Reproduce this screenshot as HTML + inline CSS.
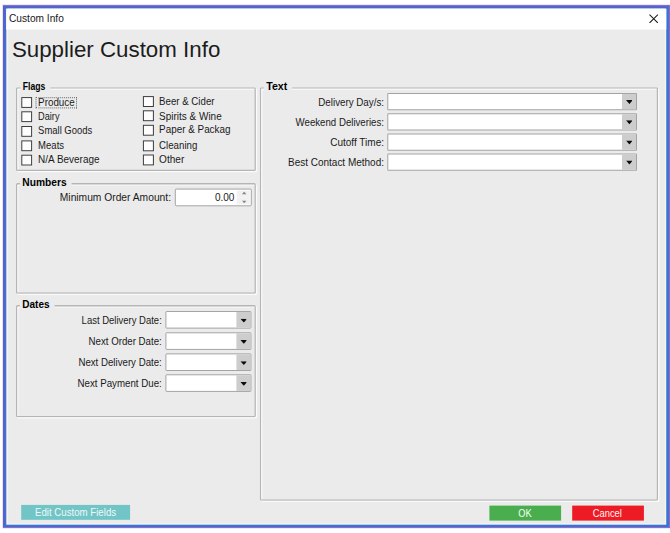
<!DOCTYPE html>
<html lang="en">
<head>
<meta charset="utf-8">
<title>Custom Info</title>
<style>
html,body{margin:0;padding:0;background:#fff;}
body{width:670px;height:533px;position:relative;overflow:hidden;font-family:"Liberation Sans",sans-serif;}
*{box-sizing:border-box;}
.abs,.t,.b{position:absolute;}
.b{left:0;top:0;transform-origin:0 0;margin:0;padding:0;min-width:0;}
.t{left:0;top:0;transform-origin:0 0;margin:0;padding:0;line-height:1;white-space:nowrap;font-weight:400;display:block;}
.gb{border-radius:1.6px;border:0;box-shadow:inset 0 0 0 1.3px #b5b5b5, inset 2.5px 2.5px 0 0 rgba(255,255,255,.8), 1.2px 1.2px 0 rgba(255,255,255,.8);}
.lgbg{background:#ebebeb;}
.cb{background:#fdfdfd;border:1px solid #3a3a3a;}
.combo{background:#fff;border:1px solid #a3a3a3;border-radius:1px;}
.combo .btn{position:absolute;right:0;top:0;bottom:0;width:14.2px;background:#cdcdcd;}
.combo .btn svg{position:absolute;left:50%;top:50%;margin-left:-3.3px;margin-top:-1.3px;}
</style>
</head>
<body>

<div class="b" style="transform:translate(2.20px,4.40px) scale(0.99970,1.00038);width:668px;height:524px;background:rgba(98,94,201,.22)"></div>
<div class="b" style="transform:translate(3.00px,5.20px) scale(1.00000,0.99924);width:667px;height:523px;background:#625ec9"></div>
<div class="b" style="transform:translate(668.70px,5.20px) scale(1.30000,0.99924);width:1px;height:523px;background:#7672d2"></div>
<div class="b" style="transform:translate(5.00px,7.60px) scale(1.00000,0.99923);width:663px;height:519px;background:#2f78d6"></div>
<div class="b" style="transform:translate(6.30px,8.70px) scale(0.99992,1.00000);width:660px;height:516px;background:#f8f2ed"></div>
<div class="b" style="transform:translate(8.10px,8.70px) scale(0.99954,0.99942);width:657px;height:515px;background:#ebebeb"></div>
<div class="b" style="transform:translate(6.20px,8.70px) scale(1.00008,0.99524);width:660px;height:21px;background:#fff"></div>
<div class="t wintitle" style="transform:translate(9.00px,14.00px) scaleX(0.9871);font-size:10.3px;color:#1a1a1a;">Custom Info</div>
<svg class="b" style="transform:translate(649.0px,14.1px)" width="9.4" height="9.4" viewBox="0 0 9.4 9.4"><path d="M0.5 0.5 L8.9 8.9 M8.9 0.5 L0.5 8.9" stroke="#222" stroke-width="1.05" fill="none"/></svg>
<h1 class="t" style="transform:translate(11.90px,38.00px) scaleX(0.9790);font-size:22.8px;color:#1c1c1c;">Supplier Custom Info</h1>
<div class="b gb" style="transform:translate(15.90px,87.30px) scale(1.00000,0.99643);width:240px;height:84px;"></div>
<div class="b lgbg" style="transform:translate(20.40px,86.30px) scale(0.99667,1.05000);width:30px;height:4px;"></div>
<div class="t legend" style="transform:translate(22.80px,82.00px) scaleX(0.8290);font-size:10.4px;color:#000;font-weight:700;">Flags</div>
<div class="b cb" style="transform:translate(21.30px,97.10px) scale(0.98182,0.98182);width:11px;height:11px;"></div>
<label class="t" style="transform:translate(38.10px,98.00px) scaleX(0.9541);font-size:10.3px;color:#1a1a1a;">Produce</label>
<div class="b cb" style="transform:translate(21.30px,111.30px) scale(0.98182,0.98182);width:11px;height:11px;"></div>
<label class="t" style="transform:translate(38.10px,112.00px) scaleX(0.8905);font-size:10.3px;color:#1a1a1a;">Dairy</label>
<div class="b cb" style="transform:translate(21.30px,126.00px) scale(0.98182,0.98182);width:11px;height:11px;"></div>
<label class="t" style="transform:translate(38.10px,126.00px) scaleX(0.9177);font-size:10.3px;color:#1a1a1a;">Small Goods</label>
<div class="b cb" style="transform:translate(21.30px,140.40px) scale(0.98182,0.98182);width:11px;height:11px;"></div>
<label class="t" style="transform:translate(38.10px,141.00px) scaleX(0.9250);font-size:10.3px;color:#1a1a1a;">Meats</label>
<div class="b cb" style="transform:translate(21.30px,154.70px) scale(0.98182,0.98182);width:11px;height:11px;"></div>
<label class="t" style="transform:translate(38.10px,155.00px) scaleX(0.9662);font-size:10.3px;color:#1a1a1a;">N/A Beverage</label>
<div class="b" style="transform:translate(35.50px,97.20px) scale(0.98810,1.01818);width:42px;height:11px;border:1px dotted #666"></div>
<div class="b cb" style="transform:translate(142.90px,96.10px) scale(1.00000,0.99091);width:11px;height:11px;"></div>
<label class="t" style="transform:translate(159.10px,97.00px) scaleX(0.9397);font-size:10.3px;color:#1a1a1a;">Beer &amp; Cider</label>
<div class="b cb" style="transform:translate(142.90px,110.30px) scale(1.00000,0.99091);width:11px;height:11px;"></div>
<label class="t" style="transform:translate(159.10px,112.00px) scaleX(0.9680);font-size:10.3px;color:#1a1a1a;">Spirits &amp; Wine</label>
<div class="b cb" style="transform:translate(142.90px,124.80px) scale(1.00000,0.99091);width:11px;height:11px;"></div>
<label class="t" style="transform:translate(159.10px,125.00px) scaleX(0.9594);font-size:10.3px;color:#1a1a1a;">Paper &amp; Packag</label>
<div class="b cb" style="transform:translate(142.90px,140.40px) scale(1.00000,0.99091);width:11px;height:11px;"></div>
<label class="t" style="transform:translate(159.10px,141.00px) scaleX(0.9396);font-size:10.3px;color:#1a1a1a;">Cleaning</label>
<div class="b cb" style="transform:translate(142.90px,154.50px) scale(1.00000,0.99091);width:11px;height:11px;"></div>
<label class="t" style="transform:translate(159.10px,155.00px) scaleX(0.9780);font-size:10.3px;color:#1a1a1a;">Other</label>
<div class="b gb" style="transform:translate(15.90px,183.10px) scale(1.00000,0.99730);width:240px;height:111px;"></div>
<div class="b lgbg" style="transform:translate(19.90px,182.10px) scale(0.99423,1.05000);width:52px;height:4px;"></div>
<div class="t legend" style="transform:translate(22.30px,178.00px) scaleX(0.9834);font-size:10.4px;color:#000;font-weight:700;">Numbers</div>
<label class="t" style="transform:translate(59.80px,193.00px) scaleX(0.9965);font-size:10.3px;color:#1a1a1a;">Minimum Order Amount:</label>
<div class="b combo" style="transform:translate(174.80px,188.60px) scale(1.00000,0.98333);width:77px;height:18px;border-radius:1.5px"><div class="abs" style="left:61.3px;top:0.9px;width:13.2px;height:6.7px;background:#f1f1f1"></div><div class="abs" style="left:61.3px;top:8.4px;width:13.2px;height:6.9px;background:#f1f1f1"></div><svg class="abs" style="left:66.2px;top:2.3px" width="4.8" height="3" viewBox="0 0 4.8 3"><path d="M0 3 L2.4 0 L4.8 3 Z" fill="#868686"/></svg><svg class="abs" style="left:66.2px;top:11.3px" width="4.8" height="3" viewBox="0 0 4.8 3"><path d="M0 0 L2.4 3 L4.8 0 Z" fill="#868686"/></svg></div>
<span class="t" style="transform:translate(214.90px,193.00px) scaleX(0.9727);font-size:10.3px;color:#1a1a1a;">0.00</span>
<div class="b gb" style="transform:translate(15.90px,305.10px) scale(1.00000,1.00089);width:240px;height:112px;"></div>
<div class="b lgbg" style="transform:translate(19.90px,304.10px) scale(0.99143,1.05000);width:35px;height:4px;"></div>
<div class="t legend" style="transform:translate(22.30px,300.00px) scaleX(0.9642);font-size:10.4px;color:#000;font-weight:700;">Dates</div>
<label class="t" style="transform:translate(81.60px,316.00px) scaleX(0.9218);font-size:10.3px;color:#1a1a1a;">Last Delivery Date:</label>
<div class="b combo" style="transform:translate(165.40px,311.00px) scale(1.00000,0.97778);width:86px;height:18px;"><div class="btn"><svg width="6.8" height="3.8" viewBox="0 0 6.8 3.8"><path d="M0 0 H6.8 L3.4 3.8 Z" fill="#0c0c0c"/></svg></div></div>
<label class="t" style="transform:translate(88.50px,337.00px) scaleX(0.9418);font-size:10.3px;color:#1a1a1a;">Next Order Date:</label>
<div class="b combo" style="transform:translate(165.40px,332.30px) scale(1.00000,0.97778);width:86px;height:18px;"><div class="btn"><svg width="6.8" height="3.8" viewBox="0 0 6.8 3.8"><path d="M0 0 H6.8 L3.4 3.8 Z" fill="#0c0c0c"/></svg></div></div>
<label class="t" style="transform:translate(78.40px,358.00px) scaleX(0.9402);font-size:10.3px;color:#1a1a1a;">Next Delivery Date:</label>
<div class="b combo" style="transform:translate(165.40px,353.40px) scale(1.00000,0.97778);width:86px;height:18px;"><div class="btn"><svg width="6.8" height="3.8" viewBox="0 0 6.8 3.8"><path d="M0 0 H6.8 L3.4 3.8 Z" fill="#0c0c0c"/></svg></div></div>
<label class="t" style="transform:translate(77.50px,379.00px) scaleX(0.9442);font-size:10.3px;color:#1a1a1a;">Next Payment Due:</label>
<div class="b combo" style="transform:translate(165.40px,374.30px) scale(1.00000,0.97778);width:86px;height:18px;"><div class="btn"><svg width="6.8" height="3.8" viewBox="0 0 6.8 3.8"><path d="M0 0 H6.8 L3.4 3.8 Z" fill="#0c0c0c"/></svg></div></div>
<div class="b gb" style="transform:translate(259.80px,87.30px) scale(1.00075,1.00097);width:398px;height:413px;"></div>
<div class="b lgbg" style="transform:translate(263.80px,86.30px) scale(1.01429,1.05000);width:28px;height:4px;"></div>
<div class="t legend" style="transform:translate(266.20px,82.00px) scaleX(1.0197);font-size:10.4px;color:#000;font-weight:700;">Text</div>
<label class="t" style="transform:translate(318.30px,98.00px) scaleX(0.9490);font-size:10.3px;color:#1a1a1a;">Delivery Day/s:</label>
<div class="b combo" style="transform:translate(387.30px,92.90px) scale(0.99880,1.01765);width:250px;height:17px;"><div class="btn"><svg width="6.8" height="3.8" viewBox="0 0 6.8 3.8"><path d="M0 0 H6.8 L3.4 3.8 Z" fill="#0c0c0c"/></svg></div></div>
<label class="t" style="transform:translate(295.60px,118.00px) scaleX(0.9379);font-size:10.3px;color:#1a1a1a;">Weekend Deliveries:</label>
<div class="b combo" style="transform:translate(387.30px,113.20px) scale(0.99880,1.01765);width:250px;height:17px;"><div class="btn"><svg width="6.8" height="3.8" viewBox="0 0 6.8 3.8"><path d="M0 0 H6.8 L3.4 3.8 Z" fill="#0c0c0c"/></svg></div></div>
<label class="t" style="transform:translate(330.20px,138.00px) scaleX(0.9724);font-size:10.3px;color:#1a1a1a;">Cutoff Time:</label>
<div class="b combo" style="transform:translate(387.30px,133.50px) scale(0.99880,1.01765);width:250px;height:17px;"><div class="btn"><svg width="6.8" height="3.8" viewBox="0 0 6.8 3.8"><path d="M0 0 H6.8 L3.4 3.8 Z" fill="#0c0c0c"/></svg></div></div>
<label class="t" style="transform:translate(288.00px,158.00px) scaleX(0.9694);font-size:10.3px;color:#1a1a1a;">Best Contact Method:</label>
<div class="b combo" style="transform:translate(387.30px,153.50px) scale(0.99880,1.01765);width:250px;height:17px;"><div class="btn"><svg width="6.8" height="3.8" viewBox="0 0 6.8 3.8"><path d="M0 0 H6.8 L3.4 3.8 Z" fill="#0c0c0c"/></svg></div></div>
<div class="b" style="transform:translate(21.20px,504.90px) scale(0.99908,0.99333);width:109px;height:15px;background:#72c5c7"></div>
<span class="t" style="transform:translate(35.00px,508.00px) scaleX(0.9384);font-size:10.3px;color:#eef8f8;">Edit Custom Fields</span>
<div class="b" style="transform:translate(489.40px,505.60px) scale(0.99583,1.00000);width:72px;height:15px;background:#4aae4f"></div>
<span class="t" style="transform:translate(518.20px,509.00px) scaleX(0.8999);font-size:10.3px;color:#f4fff4;">OK</span>
<div class="b" style="transform:translate(572.20px,505.60px) scale(0.99583,1.00000);width:72px;height:15px;background:#ec1b24"></div>
<span class="t" style="transform:translate(592.80px,509.00px) scaleX(0.9076);font-size:10.3px;color:#fff4f4;">Cancel</span>
</body>
</html>
